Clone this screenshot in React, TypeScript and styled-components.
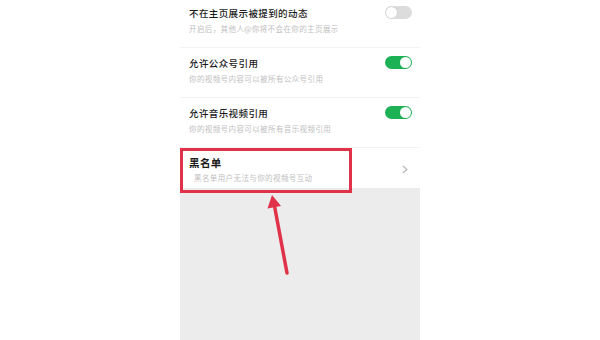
import React, { FC } from 'react'
import { styled, createGlobalStyle } from 'styled-components'

const GlobalStyle = createGlobalStyle`
  html, body {
    margin: 0;
    padding: 0;
    background: #fff;
  }
  body {
    font-family: "Noto Sans CJK SC", "Noto Sans", sans-serif;
  }
`

const Page = styled.div`
  position: relative;
  width: 600px;
  height: 340px;
  overflow: hidden;
  display: flex;
  justify-content: center;
`

const Phone = styled.div`
  width: 240px;
  height: 340px;
  background: #ececec;
  display: flex;
  flex-direction: column;
`

const List = styled.div`
  background: #fff;
  margin-top: -2px;
`

const Row = styled.div<{ $last?: boolean }>`
  height: ${p => (p.$last ? '40px' : '49px')};
  display: flex;
  align-items: flex-start;
  justify-content: space-between;
  padding: 0 8px 0 9px;
  border-bottom: ${p => (p.$last ? 'none' : '1px solid #f3f3f3')};
`

const TextCol = styled.div`
  display: flex;
  flex-direction: column;
`

const Title = styled.span<{ $bold?: boolean }>`
  margin-top: 8px;
  font-size: ${p => (p.$bold ? '10.5px' : '9.5px')};
  font-weight: ${p => (p.$bold ? 700 : 500)};
  letter-spacing: 0.4px;
  color: #1a1a1a;
  line-height: 14px;
`

const Sub = styled.span<{ $indent?: boolean }>`
  margin-top: ${p => (p.$indent ? '2px' : '3px')};
  margin-left: ${p => (p.$indent ? '5px' : '0')};
  font-size: 7.5px;
  letter-spacing: 0.4px;
  color: #c0c0c0;
  line-height: 11px;
`

const Toggle = styled.div<{ $on?: boolean }>`
  margin-top: 8px;
  width: 27px;
  height: 13px;
  border-radius: 7px;
  box-sizing: border-box;
  background: ${p => (p.$on ? '#1db156' : '#dcdcdc')};
  display: flex;
  align-items: center;
  justify-content: ${p => (p.$on ? 'flex-end' : 'flex-start')};
  padding: 1px;
`

const Knob = styled.div<{ $on?: boolean }>`
  width: 11px;
  height: 11px;
  border-radius: 50%;
  background: #fff;
  box-shadow: ${p => (p.$on ? 'none' : '0 0 0 0.5px #c8c8c8')};
`

const Chevron = styled.svg`
  margin-top: 17px;
  margin-right: 4px;
`

const Highlight = styled.div`
  position: absolute;
  left: 180px;
  top: 148px;
  width: 172px;
  height: 45px;
  box-sizing: border-box;
  border: 3px solid #e0334a;
  pointer-events: none;
`

const ArrowLayer = styled.svg`
  position: absolute;
  left: 0;
  top: 0;
  pointer-events: none;
`

interface SettingRowType {
  title: string;
  sub: string;
  on: boolean;
}

const rows: SettingRowType[] = [
  { title: '不在主页展示被提到的动态', sub: '开启后，其他人@你将不会在你的主页展示', on: false },
  { title: '允许公众号引用', sub: '你的视频号内容可以被所有公众号引用', on: true },
  { title: '允许音乐视频引用', sub: '你的视频号内容可以被所有音乐视频引用', on: true },
]

const SettingRow: FC<SettingRowType> = ({ title, sub, on }) => (
  <Row>
    <TextCol>
      <Title>{title}</Title>
      <Sub>{sub}</Sub>
    </TextCol>
    <Toggle $on={on}>
      <Knob $on={on} />
    </Toggle>
  </Row>
)

const App: FC = () => {
  return (
    <Page>
      <GlobalStyle />
      <Phone>
        <List>
          {rows.map(r => (
            <SettingRow key={r.title} {...r} />
          ))}
          <Row $last>
            <TextCol>
              <Title $bold>黑名单</Title>
              <Sub $indent>黑名单用户无法与你的视频号互动</Sub>
            </TextCol>
            <Chevron width="6" height="9" viewBox="0 0 6 9">
              <polyline points="1,1 5,4.5 1,8" fill="none" stroke="#b5b5b5" strokeWidth="1.1" />
            </Chevron>
          </Row>
        </List>
      </Phone>
      <Highlight />
      <ArrowLayer width="600" height="340" viewBox="0 0 600 340">
        <line x1="287" y1="273" x2="274.5" y2="206" stroke="#e0334a" strokeWidth="3.5" strokeLinecap="round" />
        <polygon points="272,195 281,206 267.5,208.5" fill="#e0334a" />
      </ArrowLayer>
    </Page>
  )
}

export default App
